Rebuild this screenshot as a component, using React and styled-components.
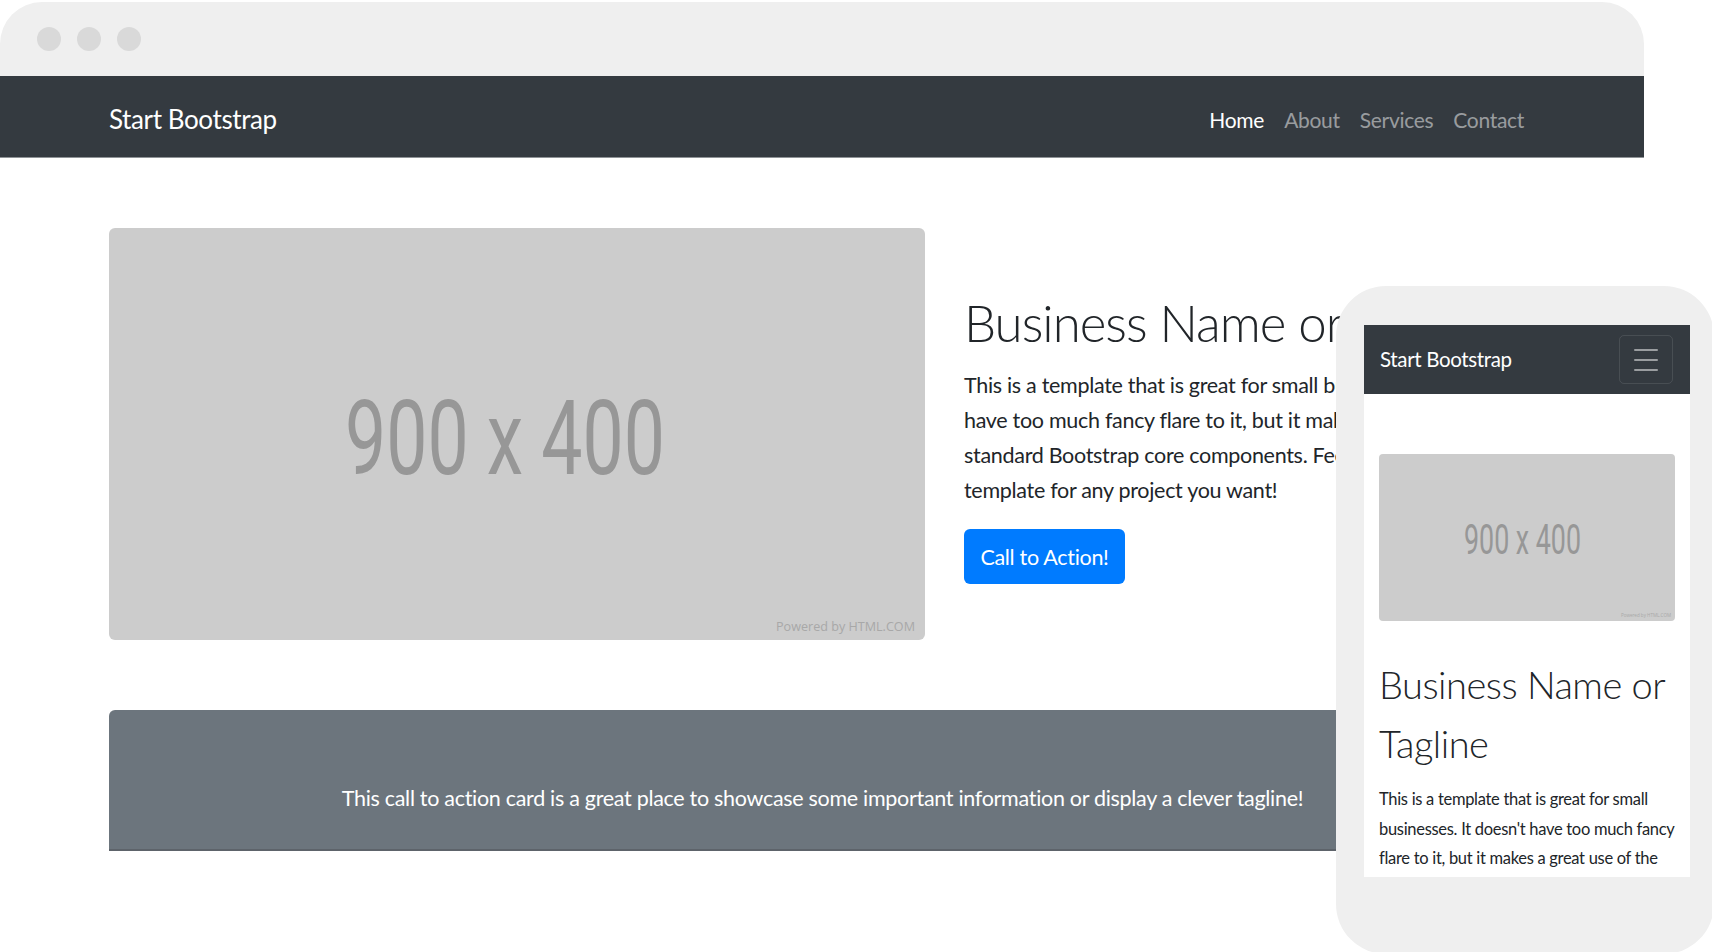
import React from "react";
import styled, { createGlobalStyle } from "styled-components";

const GlobalStyle = createGlobalStyle`
  * { box-sizing: border-box; }
  html, body { margin: 0; padding: 0; background: #ffffff; }
  body { font-family: "Lato", "Open Sans", sans-serif; color: #212529; }
`;

const Stage = styled.div`
  position: relative;
  width: 1712px;
  height: 952px;
  overflow: hidden;
  background: #ffffff;
`;

/* ---------- desktop browser mockup ---------- */
const Browser = styled.div`
  width: 1644px;
  padding-top: 2px;
  display: flex;
  flex-direction: column;
`;

const TitleBar = styled.div`
  height: 74px;
  background: #efefef;
  border-radius: 42px 42px 0 0;
  display: flex;
  align-items: center;
  gap: 16px;
  padding-left: 37px;
`;

const Dot = styled.span`
  width: 24px;
  height: 24px;
  border-radius: 50%;
  background: #d9d9d9;
`;

const Navbar = styled.nav`
  flex-shrink: 0;
  height: ${(p) => p.$h}px;
  background: #343a40;
  display: flex;
  align-items: center;
  justify-content: space-between;
  padding: ${(p) => p.$pad};
  border-bottom: ${(p) => (p.$line ? "1px solid #8f9397" : "none")};
`;

const Brand = styled.span`
  color: #ffffff;
  font-size: ${(p) => p.$size}px;
  letter-spacing: ${(p) => p.$ls}px;
  line-height: 1.5;
  white-space: nowrap;
`;

const NavLinks = styled.div`
  display: flex;
`;

const NavLink = styled.a`
  padding: 0 10px;
  font-size: 21px;
  letter-spacing: -0.3px;
  line-height: 35px;
  color: ${(p) => (p.$active ? "#ffffff" : "rgba(255,255,255,0.5)")};
  text-decoration: none;
`;

const Main = styled.main`
  padding: 0 108px 0 109px;
  display: flex;
  flex-direction: column;
`;

const HeroRow = styled.section`
  margin-top: 70px;
  display: flex;
  align-items: center;
  gap: 39px;
`;

const HeroText = styled.div`
  padding-top: 4px;
  display: flex;
  flex-direction: column;
  align-items: flex-start;
`;

const Title = styled.h1`
  margin: 0 0 ${(p) => p.$mb}px;
  font-weight: 300;
  font-size: ${(p) => p.$size}px;
  letter-spacing: ${(p) => p.$ls}px;
  line-height: ${(p) => p.$lh}px;
  color: #212529;
  white-space: nowrap;
`;

const Text = styled.p`
  margin: 0 0 ${(p) => p.$mb}px;
  font-size: ${(p) => p.$size}px;
  letter-spacing: ${(p) => p.$ls}px;
  line-height: ${(p) => p.$lh}px;
  color: #212529;
  white-space: nowrap;
`;

const Button = styled.a`
  display: inline-flex;
  align-items: center;
  justify-content: center;
  width: 161px;
  height: 55px;
  background: #007bff;
  color: #ffffff;
  border-radius: 6px;
  font-size: 21.5px;
  letter-spacing: -0.3px;
  text-decoration: none;
`;

const CtaCard = styled.section`
  margin-top: 70px;
  height: 141px;
  padding-top: 71px;
  background: #6c757d;
  border-radius: 6px 6px 0 0;
  border-bottom: 2px solid #5d636a;
  text-align: center;
`;

const CtaText = styled.p`
  margin: 0;
  color: #ffffff;
  font-size: 21.5px;
  letter-spacing: -0.3px;
  line-height: 35px;
`;

/* ---------- phone mockup (overlaps the browser) ---------- */
const Phone = styled.div`
  position: absolute;
  left: 1336px;
  top: 286px;
  width: 378px;
  height: 668px;
  border-radius: 50px;
  background: #efefef;
  padding: 39px 0 0 28px;
`;

const Screen = styled.div`
  width: 326px;
  height: 552px;
  background: #ffffff;
  overflow: hidden;
`;

const Toggler = styled.span`
  width: 54px;
  height: 49px;
  border: 1px solid rgba(255, 255, 255, 0.1);
  border-radius: 5px;
  display: flex;
  align-items: center;
  justify-content: center;
`;

const MobileBody = styled.div`
  padding: 60px 15px 0 15px;
  display: flex;
  flex-direction: column;
`;

const ImageSlot = styled.div`
  flex-shrink: 0;
  margin-bottom: ${(p) => p.$mb}px;
  display: flex;
`;

function Placeholder({ w, h, r, big, small }) {
  return (
    <svg width={w} height={h} viewBox={`0 0 ${w} ${h}`}>
      <rect x="0" y="0" width={w} height={h} rx={r} fill="#cccccc" />
      <text
        x={big.x}
        y={big.y}
        fontFamily="Roboto, 'Liberation Sans', sans-serif"
        fontSize={big.size}
        fill="#979797"
        textLength={big.len}
        lengthAdjust="spacingAndGlyphs"
      >
        900 x 400
      </text>
      <text
        x={small.x}
        y={small.y}
        fontFamily="'Open Sans', sans-serif"
        fontSize={small.size}
        fill="#a8a8a8"
        textLength={small.len}
        lengthAdjust="spacingAndGlyphs"
      >
        Powered by HTML.COM
      </text>
    </svg>
  );
}

function Hamburger() {
  return (
    <svg width="24" height="22" viewBox="0 0 24 22">
      <g stroke="rgba(255,255,255,0.5)" strokeWidth="2" strokeLinecap="round">
        <line x1="1" y1="1" x2="23" y2="1" />
        <line x1="1" y1="11" x2="23" y2="11" />
        <line x1="1" y1="21" x2="23" y2="21" />
      </g>
    </svg>
  );
}

export default function App() {
  return (
    <>
      <GlobalStyle />
      <Stage>
        <Browser>
          <TitleBar>
            <Dot />
            <Dot />
            <Dot />
          </TitleBar>
          <Navbar $h={82} $pad="5px 110px 0 109px" $line>
            <Brand $size={26} $ls={-0.4}>Start Bootstrap</Brand>
            <NavLinks>
              <NavLink $active href="#">Home</NavLink>
              <NavLink href="#">About</NavLink>
              <NavLink href="#">Services</NavLink>
              <NavLink href="#">Contact</NavLink>
            </NavLinks>
          </Navbar>
          <Main>
            <HeroRow>
              <ImageSlot $mb={0}>
                <Placeholder
                  w={816}
                  h={412}
                  r={6}
                  big={{ x: 236, y: 246, size: 103, len: 320 }}
                  small={{ x: 667, y: 403, size: 13, len: 139 }}
                />
              </ImageSlot>
              <HeroText>
                <Title $size={51} $ls={-1} $lh={70} $mb={10}>Business Name or Tagline</Title>
                <Text $size={21.5} $ls={-0.3} $lh={35} $mb={21}>
                  This is a template that is great for small businesses. It doesn't
                  <br />
                  have too much fancy flare to it, but it makes a great use of the
                  <br />
                  standard Bootstrap core components. Feel free to use this
                  <br />
                  template for any project you want!
                </Text>
                <Button href="#">Call to Action!</Button>
              </HeroText>
            </HeroRow>
            <CtaCard>
              <CtaText>
                This call to action card is a great place to showcase some important information or display a clever tagline!
              </CtaText>
            </CtaCard>
          </Main>
        </Browser>

        <Phone>
          <Screen>
            <Navbar $h={69} $pad="0 17px 0 16px">
              <Brand $size={20.5} $ls={-0.35}>Start Bootstrap</Brand>
              <Toggler>
                <Hamburger />
              </Toggler>
            </Navbar>
            <MobileBody>
              <ImageSlot $mb={34}>
                <Placeholder
                  w={296}
                  h={167}
                  r={4}
                  big={{ x: 85, y: 100, size: 42, len: 117 }}
                  small={{ x: 242, y: 163, size: 4.6, len: 50 }}
                />
              </ImageSlot>
              <Title $size={38} $ls={-0.5} $lh={59} $mb={12}>
                Business Name or
                <br />
                Tagline
              </Title>
              <Text $size={16.5} $ls={-0.3} $lh={29.5} $mb={0}>
                This is a template that is great for small
                <br />
                businesses. It doesn't have too much fancy
                <br />
                flare to it, but it makes a great use of the
              </Text>
            </MobileBody>
          </Screen>
        </Phone>
      </Stage>
    </>
  );
}
